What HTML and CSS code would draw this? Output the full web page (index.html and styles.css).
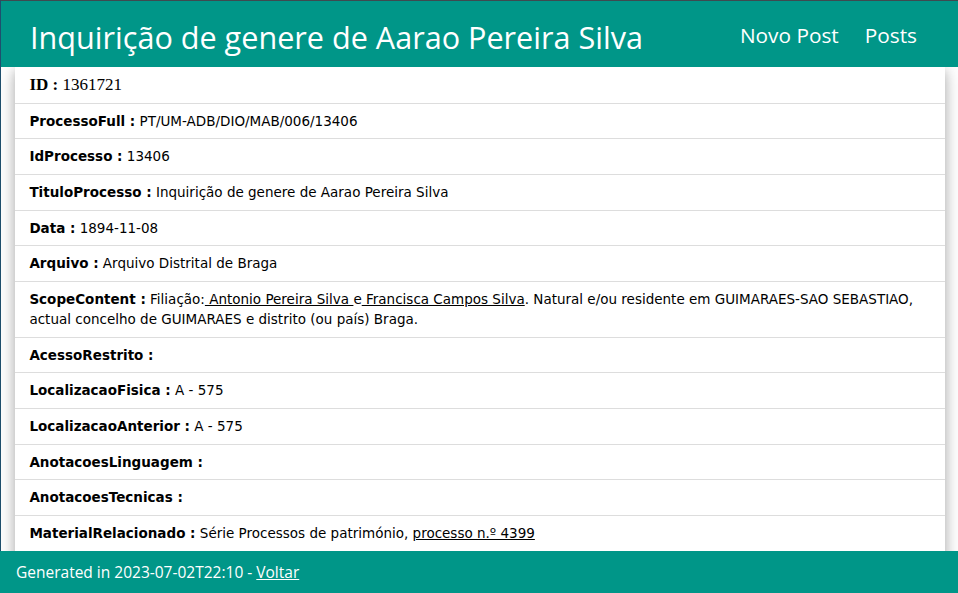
FILE: index.html
```html
<!DOCTYPE html>
<html lang="pt">
<head>
<meta charset="utf-8">
<title>Inquirição de genere de Aarao Pereira Silva</title>
<link rel="stylesheet" href="styles.css">
</head>
<body>
<div class="frame">
  <header class="topbar">
    <h1 class="title">Inquirição de genere de Aarao Pereira Silva</h1>
    <nav class="nav">
      <a class="nav-link" href="#">Novo Post</a>
      <a class="nav-link" href="#">Posts</a>
    </nav>
  </header>
  <main class="content">
    <ul class="card">
      <li class="row row-serif"><b>ID :</b> 1361721</li>
      <li class="row"><b>ProcessoFull :</b> PT/UM-ADB/DIO/MAB/006/13406</li>
      <li class="row"><b>IdProcesso :</b> 13406</li>
      <li class="row"><b>TituloProcesso :</b> Inquirição de genere de Aarao Pereira Silva</li>
      <li class="row"><b>Data :</b> 1894-11-08</li>
      <li class="row"><b>Arquivo :</b> Arquivo Distrital de Braga</li>
      <li class="row"><b>ScopeContent :</b> Filiação:<a class="ref" href="#"> Antonio Pereira Silva </a>e<a class="ref" href="#"> Francisca Campos Silva</a>. Natural e/ou residente em GUIMARAES-SAO SEBASTIAO, actual concelho de GUIMARAES e distrito (ou país) Braga.</li>
      <li class="row"><b>AcessoRestrito :</b> </li>
      <li class="row"><b>LocalizacaoFisica :</b> A - 575</li>
      <li class="row"><b>LocalizacaoAnterior :</b> A - 575</li>
      <li class="row"><b>AnotacoesLinguagem :</b> </li>
      <li class="row"><b>AnotacoesTecnicas :</b> </li>
      <li class="row"><b>MaterialRelacionado :</b> Série Processos de património, <a class="ref" href="#">processo n.º 4399</a></li>
    </ul>
  </main>
  <footer class="footer"><span class="footer-text">Generated in 2023-07-02T22:10 - <a class="ref" href="#">Voltar</a></span></footer>
</div>
</body>
</html>
```
FILE: styles.css
```css
html, body {
  margin: 0;
  padding: 0;
  height: 100%;
  overflow: hidden;
  background: #ffffff;
}
.frame {
  height: 100%;
  box-sizing: border-box;
  border-top: 1px solid #3e4a50;
  border-left: 1px solid #1f4f6e;
  font-family: "DejaVu Sans", Verdana, sans-serif;
  font-size: 13.5px;
  line-height: 20.25px;
  color: #000;
}
.topbar {
  display: flex;
  align-items: center;
  justify-content: space-between;
  height: 66px;
  background: #009688;
  color: #fff;
  padding: 0 28px 0 29px;
  position: relative;
  z-index: 2;
}
.title {
  margin: 0;
  font-family: "Open Sans", "Noto Sans", sans-serif;
  font-weight: 400;
  font-size: 30.6px;
  line-height: 1.2;
  padding-top: 7px;
}
.nav {
  display: flex;
  padding-top: 2px;
}
.nav-link {
  color: #fff;
  text-decoration: none;
  font-family: "Open Sans", "Noto Sans", sans-serif;
  font-size: 20.8px;
  padding: 0 13px;
}
.content {
  padding: 0 13px 0 14px;
}
.card {
  list-style: none;
  margin: 0;
  padding: 0;
  background: #fff;
  box-shadow: 0 4px 10px 0 rgba(0,0,0,0.2), 0 4px 20px 0 rgba(0,0,0,0.19);
}
.row {
  padding: 7.2px 14.4px;
  border-bottom: 1px solid #dddddd;
}
.row:last-child {
  border-bottom: none;
  padding-bottom: 30px;
}
.row-serif {
  font-family: "Liberation Serif", "Times New Roman", serif;
  font-size: 17px;
  padding-top: 8.2px;
}
.ref {
  color: #000;
  text-decoration: underline;
}
.footer {
  position: fixed;
  left: 0;
  right: 0;
  bottom: 0;
  height: 42px;
  box-sizing: border-box;
  padding: 0 16px;
  display: flex;
  align-items: center;
  background: #009688;
  color: #fff;
  font-family: "Open Sans", "Noto Sans", sans-serif;
  font-size: 15.5px;
  z-index: 3;
}
.footer .ref {
  color: #fff;
}
```
